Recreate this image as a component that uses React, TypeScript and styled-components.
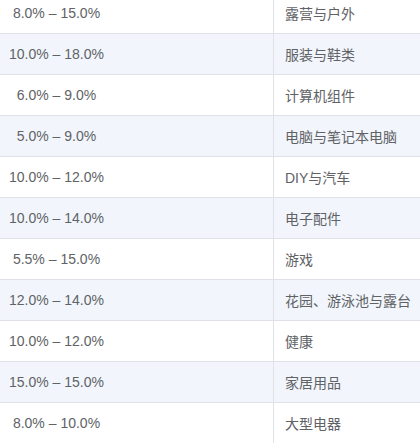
import React from "react";
import styled, { createGlobalStyle } from "styled-components";

const Global = createGlobalStyle`
  html, body { margin: 0; padding: 0; background: #ffffff; overflow: hidden; }
  body { font-family: "Liberation Sans", Arial, "Noto Sans CJK SC", sans-serif; }
`;

const Table = styled.div`
  display: grid;
  grid-template-columns: 274px 1fr;
  width: 420px;
  margin-top: -7px;
  font-size: 14px;
  color: #606266;
`;

const Row = styled.div<{ $striped: boolean }>`
  display: contents;
  & > div {
    background: ${(p) => (p.$striped ? "#f2f6fc" : "#ffffff")};
  }
`;

const RangeCell = styled.div`
  height: 40px;
  border-bottom: 1px solid #dfe3e9;
  border-right: 1px solid #dfe3e9;
  padding-right: 160px;
  display: flex;
  align-items: center;
  justify-content: center;
  white-space: pre;
`;

const NameCell = styled.div`
  height: 40px;
  border-bottom: 1px solid #dfe3e9;
  padding-left: 11px;
  display: flex;
  align-items: center;
  font-family: "Liberation Sans", Arial, "Noto Sans CJK SC", sans-serif;
`;

const rows: [string, string][] = [
  ["8.0% – 15.0%", "露营与户外"],
  ["10.0% – 18.0%", "服装与鞋类"],
  ["6.0% – 9.0%", "计算机组件"],
  ["5.0% – 9.0%", "电脑与笔记本电脑"],
  ["10.0% – 12.0%", "DIY与汽车"],
  ["10.0% – 14.0%", "电子配件"],
  ["5.5% – 15.0%", "游戏"],
  ["12.0% – 14.0%", "花园、游泳池与露台"],
  ["10.0% – 12.0%", "健康"],
  ["15.0% – 15.0%", "家居用品"],
  ["8.0% – 10.0%", "大型电器"],
];

export default function App() {
  return (
    <>
      <Global />
      <Table>
        {rows.map(([range, name], i) => (
          <Row key={i} $striped={i % 2 === 1}>
            <RangeCell>{range}</RangeCell>
            <NameCell>{name}</NameCell>
          </Row>
        ))}
      </Table>
    </>
  );
}
